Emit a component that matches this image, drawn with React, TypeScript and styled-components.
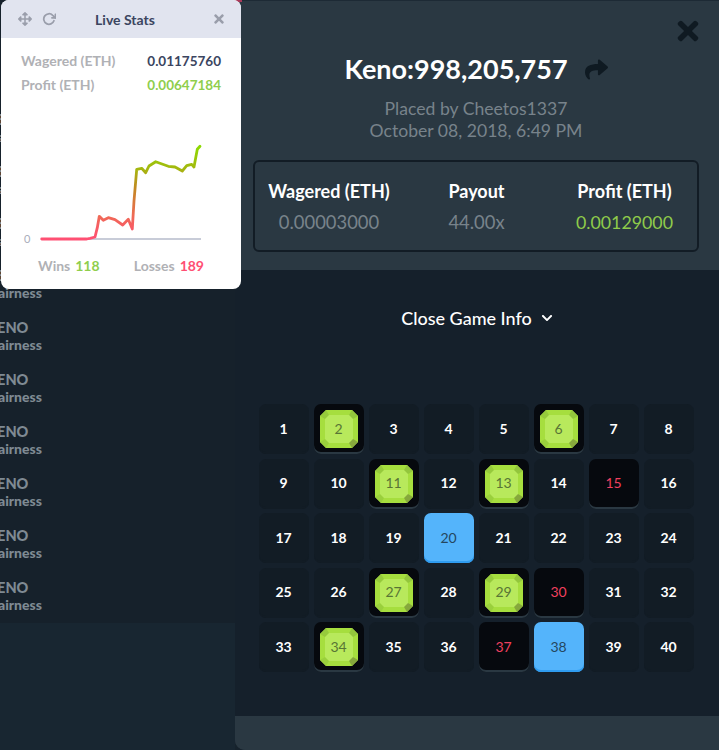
import React from "react";
import styled, { createGlobalStyle } from "styled-components";
import { FaArrowsAlt, FaShare, FaTimes, FaChevronDown } from "react-icons/fa";
import { FiRotateCw } from "react-icons/fi";

const FONT = `Lato, "Open Sans", "Liberation Sans", sans-serif`;

const GlobalStyle = createGlobalStyle`
  html, body {
    margin: 0;
    padding: 0;
    background: #16222c;
    font-family: ${FONT};
  }
`;

const Page = styled.div`
  position: relative;
  display: flex;
  width: 719px;
  height: 750px;
  overflow: hidden;
  background: #16222c;
`;

const Sidebar = styled.aside`
  display: flex;
  flex-direction: column;
  width: 235px;
  flex: none;
`;

const GameList = styled.div`
  height: 623px;
  flex: none;
  padding-top: 111px;
  box-sizing: border-box;
  overflow: hidden;
  background: #16212b;
`;

const GameRow = styled.div`
  height: 52px;
  margin-left: -13px;
  color: #7f8a93;
  font-weight: 900;
  font-size: 14.5px;
  line-height: 17px;
`;

const GameName = styled.div``;

const GameSub = styled.div`
  margin-left: 4px;
  font-size: 14px;
`;

const SidebarFooter = styled.div`
  flex: 1;
  background: #182631;
`;

const Modal = styled.main`
  position: relative;
  display: flex;
  flex-direction: column;
  flex: 1;
  overflow: hidden;
  border-radius: 0 0 0 10px;
  background: #2a3842;
`;

const ModalHeader = styled.header`
  height: 270px;
  flex: none;
  box-sizing: border-box;
  padding: 50px 20px 0 18px;
  background: #2a3842;
  border-top: 1px solid #1d2a35;
`;

const CloseButton = styled.button`
  position: absolute;
  top: 16px;
  right: 16px;
  display: flex;
  padding: 0;
  border: 0;
  background: none;
  color: #0f1a22;
  font-size: 30px;
`;

const TitleRow = styled.div`
  display: flex;
  align-items: center;
  justify-content: center;
  gap: 17px;
  height: 36px;
  color: #fff;
`;

const Title = styled.h1`
  margin: 0;
  font-size: 27px;
  font-weight: 700;
  line-height: 36px;
`;

const ShareIcon = styled(FaShare)`
  color: #0f1a22;
  font-size: 23px;
`;

const Meta = styled.div`
  margin-top: 11px;
  color: #78838b;
  font-size: 17.6px;
  line-height: 22px;
  text-align: center;
`;

const StatBox = styled.div`
  display: grid;
  grid-template-columns: 148px 147px 1fr;
  align-items: center;
  height: 92px;
  margin-top: 18px;
  box-sizing: border-box;
  border: 2px solid #121c25;
  border-radius: 6px;
  text-align: center;
`;

const StatCol = styled.div`
  display: flex;
  flex-direction: column;
  gap: 9px;
  &:last-child {
    padding-left: 2px;
  }
`;

const StatLabel = styled.div`
  color: #fff;
  font-size: 18px;
  font-weight: 700;
  line-height: 22px;
`;

const StatValue = styled.div<{ $green?: boolean }>`
  color: ${(p) => (p.$green ? "#8fcb4a" : "#78838b")};
  font-size: ${(p) => (p.$green ? "17.8px" : "18.4px")};
  line-height: 22px;
`;

const ModalBody = styled.section`
  display: flex;
  flex-direction: column;
  align-items: center;
  flex: 1;
  background: #15202b;
`;

const Toggle = styled.div`
  display: flex;
  align-items: center;
  gap: 9px;
  margin-top: 37px;
  height: 22px;
  color: #fff;
  font-size: 18px;
  font-weight: 500;
`;

const Board = styled.div`
  display: grid;
  grid-template-columns: repeat(8, 50px);
  grid-auto-rows: 50px;
  column-gap: 5px;
  row-gap: 4.5px;
  margin: 75px 0 0 -2px;
`;

type CellKind = "idle" | "hit" | "miss" | "pick";

const Cell = styled.div<{ $kind: CellKind }>`
  position: relative;
  display: flex;
  align-items: center;
  justify-content: center;
  box-sizing: border-box;
  padding-bottom: 2px;
  border-radius: 7px;
  font-size: 14px;
  font-weight: ${(p) => (p.$kind === "idle" ? 700 : 400)};
  color: ${(p) =>
    p.$kind === "idle"
      ? "#fff"
      : p.$kind === "miss"
        ? "#f0405f"
        : p.$kind === "pick"
          ? "#24475f"
          : "#587535"};
  background: ${(p) =>
    p.$kind === "idle" ? "#121c25" : p.$kind === "pick" ? "#54b4fb" : "#06090e"};
  box-shadow: inset 0 -2px 0
    ${(p) =>
      p.$kind === "idle"
        ? "#121c25"
        : p.$kind === "pick"
          ? "#2f9cf0"
          : "#2a3842"};
`;

const GemIcon = styled.svg`
  position: absolute;
  left: 6px;
  top: 6px;
`;

const CellNumber = styled.span`
  position: relative;
`;

const ModalFooter = styled.footer`
  height: 34px;
  flex: none;
  background: #2a3842;
`;

const CornerPeek = styled.div`
  position: absolute;
  left: 228px;
  top: 0;
  width: 14px;
  height: 2px;
  background: #a83a5a;
`;

const StatsWidget = styled.div`
  position: absolute;
  left: 1px;
  top: 0;
  width: 240px;
  height: 289px;
  border-radius: 8px;
  overflow: hidden;
  background: #fff;
`;

const WidgetHeader = styled.div`
  position: relative;
  display: flex;
  align-items: center;
  justify-content: space-between;
  height: 38px;
  padding: 0 15px 0 17px;
  background: #e1e4ef;
  color: #9a9eab;
`;

const WidgetTools = styled.div`
  display: flex;
  align-items: center;
  gap: 10px;
  font-size: 14px;
`;

const WidgetTitle = styled.div`
  position: absolute;
  left: 0;
  right: 0;
  color: #3b4560;
  font-size: 14px;
  font-weight: 700;
  text-align: center;
  transform: translateX(4px);
`;

const WidgetStats = styled.div`
  display: flex;
  flex-direction: column;
  gap: 6px;
  padding: 14px 20px 0 20px;
`;

const WidgetRow = styled.div`
  display: flex;
  justify-content: space-between;
  height: 18px;
  font-size: 14px;
  font-weight: 700;
  line-height: 18px;
`;

const WidgetLabel = styled.span`
  color: #b0b1b5;
`;

const WidgetValue = styled.span<{ $green?: boolean }>`
  color: ${(p) => (p.$green ? "#8fce4c" : "#3b4560")};
  font-size: 13.5px;
`;

const Chart = styled.svg`
  display: block;
  margin-top: 15px;
`;

const Tally = styled.div`
  display: flex;
  justify-content: space-between;
  padding: 14px 37px 0 37px;
  font-size: 14px;
  font-weight: 700;
`;

const TallyItem = styled.span`
  color: #b0b1b5;
`;

const TallyValue = styled.span<{ $color: string }>`
  margin-left: 5px;
  color: ${(p) => p.$color};
`;

const hits = [2, 6, 11, 13, 27, 29, 34];
const misses = [15, 30, 37];
const picks = [20, 38];

const kindOf = (n: number): CellKind =>
  hits.includes(n) ? "hit" : misses.includes(n) ? "miss" : picks.includes(n) ? "pick" : "idle";

const Gem = () => (
  <GemIcon width="38" height="38" viewBox="0 0 38 38">
    <polygon points="6,0 32,0 38,6 38,32 32,38 6,38 0,32 0,6" fill="#a6de3e" />
    <polygon points="8,5 30,5 33,8 33,30 30,33 8,33 5,30 5,8" fill="#b8e95c" />
    <polygon points="32,0 38,6 33,9 29,5" fill="#93c63c" />
    <polygon points="6,0 0,6 5,9 9,5" fill="#96ca3c" />
    <polygon points="38,32 32,38 29,33 33,29" fill="#86a83c" />
    <polygon points="0,32 6,38 9,33 5,29" fill="#9ad03c" />
  </GemIcon>
);

const chartPoints = [
  [125, 714], [260, 714], [270, 712], [285, 708], [292, 680], [298, 646], [310, 658],
  [325, 650], [345, 656], [368, 672], [385, 655], [397, 684], [402, 600], [410, 505],
  [425, 502], [437, 515], [447, 495], [467, 482], [505, 496], [525, 498], [547, 510],
  [560, 494], [575, 490], [582, 498], [592, 445], [600, 436],
]
  .map(([x, y]) => `${(x / 3 - 1).toFixed(1)},${(y / 3 - 108).toFixed(1)}`)
  .join(" ");

const LiveChart = () => (
  <Chart width="240" height="134" viewBox="0 0 240 134">
    <defs>
      <linearGradient id="profit" gradientUnits="userSpaceOnUse" x1="0" y1="130" x2="0" y2="36">
        <stop offset="0" stopColor="#ff4f73" />
        <stop offset="0.25" stopColor="#ef6a55" />
        <stop offset="0.55" stopColor="#c08a20" />
        <stop offset="0.75" stopColor="#a4b80f" />
        <stop offset="1" stopColor="#8bdc00" />
      </linearGradient>
    </defs>
    <line x1="40" y1="130" x2="200" y2="130" stroke="#c8ccd8" strokeWidth="2" />
    <text x="23" y="134" fill="#a9adbb" fontSize="11" fontFamily={FONT}>0</text>
    <polyline points={chartPoints} fill="none" stroke="url(#profit)" strokeWidth="2.8" strokeLinejoin="round" strokeLinecap="round" />
  </Chart>
);

export default function App() {
  return (
    <Page>
      <GlobalStyle />
      <Sidebar>
        <GameList>
          {Array.from({ length: 10 }, (_, i) => (
            <GameRow key={i}>
              <GameName>KENO</GameName>
              <GameSub>Fairness</GameSub>
            </GameRow>
          ))}
        </GameList>
        <SidebarFooter />
      </Sidebar>
      <Modal>
        <ModalHeader>
          <TitleRow>
            <Title>Keno:998,205,757</Title>
            <ShareIcon />
          </TitleRow>
          <Meta>
            Placed by Cheetos1337
            <br />
            October 08, 2018, 6:49 PM
          </Meta>
          <StatBox>
            <StatCol>
              <StatLabel>Wagered (ETH)</StatLabel>
              <StatValue>0.00003000</StatValue>
            </StatCol>
            <StatCol>
              <StatLabel>Payout</StatLabel>
              <StatValue>44.00x</StatValue>
            </StatCol>
            <StatCol>
              <StatLabel>Profit (ETH)</StatLabel>
              <StatValue $green>0.00129000</StatValue>
            </StatCol>
          </StatBox>
        </ModalHeader>
        <CloseButton aria-label="Close">
          <FaTimes />
        </CloseButton>
        <ModalBody>
          <Toggle>
            Close Game Info
            <FaChevronDown size={12} />
          </Toggle>
          <Board>
            {Array.from({ length: 40 }, (_, i) => {
              const n = i + 1;
              const kind = kindOf(n);
              return (
                <Cell key={n} $kind={kind}>
                  {kind === "hit" && <Gem />}
                  <CellNumber>{n}</CellNumber>
                </Cell>
              );
            })}
          </Board>
        </ModalBody>
        <ModalFooter />
      </Modal>
      <CornerPeek />
      <StatsWidget>
        <WidgetHeader>
          <WidgetTools>
            <FaArrowsAlt />
            <FiRotateCw strokeWidth={3} />
          </WidgetTools>
          <WidgetTitle>Live Stats</WidgetTitle>
          <FaTimes size={14} />
        </WidgetHeader>
        <WidgetStats>
          <WidgetRow>
            <WidgetLabel>Wagered (ETH)</WidgetLabel>
            <WidgetValue>0.01175760</WidgetValue>
          </WidgetRow>
          <WidgetRow>
            <WidgetLabel>Profit (ETH)</WidgetLabel>
            <WidgetValue $green>0.00647184</WidgetValue>
          </WidgetRow>
        </WidgetStats>
        <LiveChart />
        <Tally>
          <TallyItem>
            Wins<TallyValue $color="#8fce4c">118</TallyValue>
          </TallyItem>
          <TallyItem>
            Losses<TallyValue $color="#ff4f73">189</TallyValue>
          </TallyItem>
        </Tally>
      </StatsWidget>
    </Page>
  );
}
